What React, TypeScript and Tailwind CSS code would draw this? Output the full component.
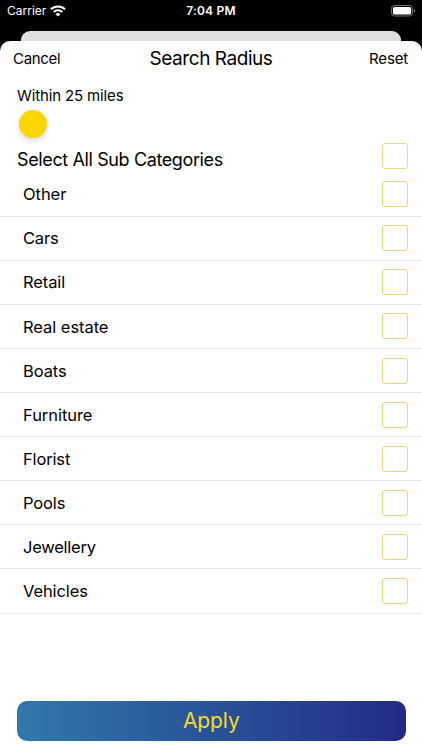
import { useState } from 'react';

const categories = [
    { name: 'Other', tracking: 'tracking-[-0.05px]' },
    { name: 'Cars', tracking: 'tracking-[-0.2px]' },
    { name: 'Retail', tracking: 'tracking-[-0.1px]' },
    { name: 'Real estate', tracking: 'tracking-[-0.05px]' },
    { name: 'Boats', tracking: 'tracking-[-0.1px]' },
    { name: 'Furniture', tracking: 'tracking-[-0.05px]' },
    { name: 'Florist', tracking: 'tracking-[-0.15px]' },
    { name: 'Pools', tracking: 'tracking-[-0.15px]' },
    { name: 'Jewellery', tracking: 'tracking-[-0.25px]' },
    { name: 'Vehicles', tracking: 'tracking-[-0.1px]' },
];

function WifiIcon() {
    return (
        <svg width="16" height="12" viewBox="0 0 16 12" fill="none" stroke="#fff">
            <path d="M1 4.3a10 10 0 0 1 14 0" strokeWidth="2.1" />
            <path d="M3.7 7.1a6.1 6.1 0 0 1 8.6 0" strokeWidth="2" />
            <path d="M8 11.6 5.6 9.2a3.4 3.4 0 0 1 4.8 0Z" fill="#fff" stroke="none" />
        </svg>
    );
}

function BatteryIcon() {
    return (
        <svg width="24" height="12" viewBox="0 0 24 12" fill="none">
            <rect x="0.5" y="0.5" width="21" height="10.5" rx="3" stroke="#777" />
            <rect x="1.9" y="1.9" width="18.2" height="7.7" rx="1.7" fill="#fff" />
            <path d="M22.8 4v3.6c.8-.3 1.2-1 1.2-1.8s-.4-1.500-1.200-1.800Z" fill="#888" />
        </svg>
    );
}

function Checkbox({ label, checked, onChange }: { label: string; checked: boolean; onChange: () => void }) {
    return (
        <button
            type="button"
            role="checkbox"
            aria-checked={checked}
            aria-label={label}
            onClick={onChange}
            className={`size-[26px] shrink-0 rounded-[3px] border border-[#efd57c] ${checked ? 'bg-[#ffd500]' : 'bg-white'}`}
        />
    );
}

export default function App() {
    const [selected, setSelected] = useState<string[]>([]);
    const allSelected = selected.length === categories.length;

    const toggle = (name: string) => {
        setSelected((prev) => (prev.includes(name) ? prev.filter((n) => n !== name) : [...prev, name]));
    };

    const toggleAll = () => {
        setSelected(allSelected ? [] : categories.map((c) => c.name));
    };

    return (
        <div className="flex h-[750px] w-[422px] flex-col overflow-hidden bg-black font-['Inter',sans-serif] text-black">
            {/* Status bar */}
            <div className="grid h-[31px] shrink-0 grid-cols-3 items-start px-[7px] pt-[4px] text-white">
                <div className="flex items-center gap-[4px]">
                    <span className="text-[12px] leading-[14px]">Carrier</span>
                    <WifiIcon />
                </div>
                <span className="text-center text-[12px] leading-[14px] font-semibold tracking-[0.2px]">7:04 PM</span>
                <div className="flex justify-end pt-px">
                    <BatteryIcon />
                </div>
            </div>

            {/* Edge of the sheet behind */}
            <div className="mx-[21px] h-[10px] shrink-0 rounded-t-[9px] bg-[#e0e0e0]" />

            <div className="flex flex-1 flex-col rounded-t-[10px] bg-white">
                <header className="grid h-9 grid-cols-3 items-center pr-[14px] pl-[13px]">
                    <button type="button" className="text-left text-[15px] tracking-[-0.3px]">Cancel</button>
                    <h1 className="pl-px text-center text-[19px] whitespace-nowrap tracking-[-0.45px]">Search Radius</h1>
                    <button type="button" className="text-right text-[15px] tracking-[-0.15px]" onClick={() => setSelected([])}>
                        Reset
                    </button>
                </header>

                <section className="h-[61px] pt-[9px] pl-[17px]">
                    <p className="text-[15px] leading-5 tracking-[-0.13px]">Within 25 miles</p>
                    <div className="mt-[4.3px] ml-[1.5px] size-7 rounded-full bg-[#ffd500] shadow-[0_3px_6px_rgba(0,0,0,0.16)]" />
                </section>

                <div className="flex h-[34.6px] items-start justify-between pr-[14px] pl-[17px]">
                    <span className="pt-[10px] text-[18px] leading-6 tracking-[-0.38px]">Select All Sub Categories</span>
                    <div className="pt-[5px]">
                        <Checkbox label="Select All Sub Categories" checked={allSelected} onChange={toggleAll} />
                    </div>
                </div>

                <ul>
                    {categories.map(({ name, tracking }) => (
                        <li
                            key={name}
                            className="flex h-[44.1px] items-center justify-between border-b border-[#e9e9e9] pr-[14px] pl-[23px]"
                        >
                            <span className={`pt-px text-[16.5px] ${tracking}`}>{name}</span>
                            <Checkbox label={name} checked={selected.includes(name)} onChange={() => toggle(name)} />
                        </li>
                    ))}
                </ul>

                <div className="mt-auto px-[17px] pb-[9.5px]">
                    <button
                        type="button"
                        className="h-[39.8px] w-[388.5px] rounded-[10px] bg-linear-to-r from-[#3278aa] to-[#232a87] pt-px text-[21px] tracking-[-0.1px] text-[#f5da2a]"
                    >
                        Apply
                    </button>
                </div>
            </div>
        </div>
    );
}
